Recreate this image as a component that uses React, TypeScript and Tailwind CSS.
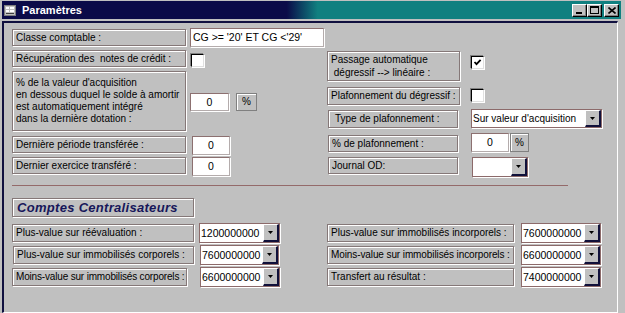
import React from "react";

type P = { className?: string; children?: React.ReactNode };

function Label({ className = "", children }: P) {
  return (
    <div
      className={`shrink-0 border border-[#857878] bg-[#c0c0c0] shadow-[1px_1px_0_#fff,inset_1px_1px_0_#fff] pl-[3px] flex items-center leading-[12px] whitespace-nowrap ${className}`}
    >
      {children}
    </div>
  );
}

function Check({ className = "", checked = false }: { className?: string; checked?: boolean }) {
  return (
    <div
      className={`shrink-0 w-[13px] h-[13px] bg-white border border-black border-b-[#e0e0e0] border-r-[#e0e0e0] shadow-[-1px_-1px_0_#808080,1px_1px_0_#fff] flex items-center justify-center ${className}`}
    >
      {checked && (
        <svg width="9" height="9" viewBox="0 0 9 9">
          <path d="M1.5 4 L3.5 6.2 L7.6 1.8" stroke="black" strokeWidth="1.8" fill="none" />
        </svg>
      )}
    </div>
  );
}

function Field({ className = "", children }: P) {
  return (
    <div
      className={`shrink-0 bg-white border border-[#8c7070] border-b-[#b4acac] border-r-[#b4acac] shadow-[1px_1px_0_#fff] flex items-center justify-center text-[10.5px] leading-none ${className}`}
    >
      {children}
    </div>
  );
}

function PctBtn({ className = "" }: P) {
  return (
    <div
      className={`shrink-0 bg-[#c0c0c0] border border-[#808080] shadow-[inset_1px_1px_0_#fff] flex items-center justify-center text-[10px] leading-none ${className}`}
    >
      %
    </div>
  );
}

function Combo({ className = "", value = "", textClass = "text-[10.5px]" }: { className?: string; value?: string; textClass?: string }) {
  return (
    <div className={`shrink-0 flex bg-white border border-[#8c6a6a] shadow-[1px_1px_0_#fff] ${className}`}>
      <div className={`flex-1 flex items-center pl-[1px] leading-none overflow-hidden whitespace-nowrap ${textClass}`}>
        {value}
      </div>
      <div className="w-[16px] shrink-0 bg-[#c0c0c0] border-t border-l border-t-white border-l-white border-r-2 border-b-2 border-r-[#10103a] border-b-[#10103a] flex items-center justify-center">
        <svg width="5" height="3" viewBox="0 0 5 3">
          <path d="M0 0h5L2.5 3z" fill="black" />
        </svg>
      </div>
    </div>
  );
}

function WinBtn({ children, className = "" }: P) {
  return (
    <div
      className={`w-[15px] h-[13px] bg-[#c0c0c0] border border-white border-b-black border-r-black shadow-[inset_-1px_-1px_0_#808080] flex items-center justify-center ${className}`}
    >
      {children}
    </div>
  );
}

export default function App() {
  return (
    <div className="w-[625px] h-[313px] bg-[#c0c0c0] overflow-hidden font-['Liberation_Sans',Arial,sans-serif] text-[10px] text-black">
      {/* Title bar */}
      <div className="ml-[2px] mt-[1px] w-[619px] h-[18px] flex items-center bg-[linear-gradient(to_right,#0b0b48_0%,#0b0b48_46%,#108080_51%,#108080_100%)]">
        <svg width="12" height="11" viewBox="0 0 12 11" className="ml-[2px]">
          <rect x="0.5" y="0.5" width="11" height="10" fill="#c0c0c0" stroke="#808080" />
          <rect x="2" y="2" width="3" height="2" fill="#fff" />
          <rect x="6" y="2" width="4" height="2" fill="#fff" />
          <rect x="2" y="5" width="3" height="2" fill="#fff" />
          <rect x="6" y="5" width="4" height="2" fill="#fff" />
          <rect x="2" y="8" width="8" height="1" fill="#404040" />
        </svg>
        <span className="ml-[6px] text-white font-bold text-[11px] leading-none">Paramètres</span>
        <div className="ml-auto flex items-center mr-[2px]">
          <WinBtn>
            <svg width="7" height="7" viewBox="0 0 7 7">
              <rect x="0" y="5" width="6" height="2" fill="black" />
            </svg>
          </WinBtn>
          <WinBtn>
            <svg width="9" height="8" viewBox="0 0 9 8">
              <rect x="0.5" y="0.5" width="8" height="7" fill="none" stroke="black" />
              <rect x="0" y="0" width="9" height="2" fill="black" />
            </svg>
          </WinBtn>
          <WinBtn className="ml-[2px]">
            <svg width="8" height="7" viewBox="0 0 8 7">
              <path d="M0.5 0.5 L7.5 6.5 M7.5 0.5 L0.5 6.5" stroke="black" strokeWidth="1.6" />
            </svg>
          </WinBtn>
        </div>
      </div>

      {/* Content pane */}
      <div className="ml-[2px] mt-[2px] w-[616px] h-[292px] border-l-2 border-t-2 border-[#10103f] border-r border-b border-r-white border-b-white pl-[8px] pt-[5px]">
        {/* Top section */}
        <div className="flex items-start">
          {/* Left column */}
          <div className="w-[315px] shrink-0 flex flex-col">
            <div className="flex items-start">
              <Label className="w-[174px] h-[17px] mt-[1px]">Classe comptable :</Label>
              <Field className="ml-[4px] w-[134px] h-[19px] justify-start! pl-[2px]">
                CG &gt;= '20' ET CG &lt;'29'
              </Field>
            </div>
            <div className="flex items-start mt-[3px]">
              <Label className="w-[174px] h-[17px]">Récupération des&nbsp; notes de crédit :</Label>
              <Check className="ml-[5px] mt-[4px]" />
            </div>
            <div className="flex items-start mt-[4px]">
              <Label className="w-[174px] h-[60px] items-start! pt-[5px] pl-[2px]">
                <div className="leading-[12px]">
                  % de la valeur d'acquisition
                  <br />
                  en dessous duquel le solde à amortir
                  <br />
                  est automatiquement intégré
                  <br />
                  dans la dernière dotation :
                </div>
              </Label>
              <Field className="ml-[4px] mt-[22px] w-[39px] h-[18px]">0</Field>
              <PctBtn className="ml-[7px] mt-[22px] w-[21px] h-[18px]" />
            </div>
            <div className="flex items-start mt-[5px]">
              <Label className="w-[174px] h-[17px]">Dernière période transférée :</Label>
              <Field className="ml-[6px] w-[38px] h-[19px]">0</Field>
            </div>
            <div className="flex items-start mt-[2px]">
              <Label className="w-[174px] h-[17px]">Dernier exercice transféré :</Label>
              <Field className="ml-[6px] w-[38px] h-[19px]">0</Field>
            </div>
          </div>

          {/* Right column */}
          <div className="flex flex-col">
            <div className="flex items-start mt-[23px]">
              <Label className="w-[133px] h-[30px] items-start! pt-[1px]">
                <div className="leading-[13px]">
                  Passage automatique
                  <br />
                  &nbsp;dégressif --&gt; linéaire :
                </div>
              </Label>
              <Check className="ml-[11px] mt-[5px]" checked />
            </div>
            <div className="flex items-start mt-[6px]">
              <Label className="w-[133px] h-[18px]">Plafonnement du dégressif :</Label>
              <Check className="ml-[11px] mt-[2px]" />
            </div>
            <div className="flex items-start mt-[4px]">
              <Label className="ml-[1px] w-[130px] h-[18px] mt-[1px] pl-[6px]">Type de plafonnement :</Label>
              <Combo className="ml-[13px] w-[131px] h-[19px]" value="Sur valeur d'acquisition" textClass="text-[10px]" />
            </div>
            <div className="flex items-start mt-[5px]">
              <Label className="ml-[1px] w-[130px] h-[17px] mt-[2px] pl-[2px]">% de plafonnement :</Label>
              <Field className="ml-[13px] w-[38px] h-[19px]">0</Field>
              <PctBtn className="ml-[1px] w-[19px] h-[19px]" />
            </div>
            <div className="flex items-start mt-[5px]">
              <Label className="ml-[1px] w-[130px] h-[17px] pl-[2px]">Journal OD:</Label>
              <Combo className="ml-[14px] w-[56px] h-[20px]" />
            </div>
          </div>
        </div>

        {/* Divider */}
        <div className="mt-[8px] w-[556px] h-[1px] bg-[#946a6a]" />

        {/* Heading */}
        <div className="mt-[12px] w-[182px] h-[19px] border border-[#857878] shadow-[1px_1px_0_#fff,inset_1px_1px_0_#fff] flex items-center pl-[4px]">
          <span className="font-bold italic text-[13px] tracking-[0.3px] text-[#17175a] leading-none">
            Comptes Centralisateurs
          </span>
        </div>

        {/* Bottom grid */}
        <div className="mt-[6px] flex flex-col gap-[2px]">
          <div className="flex items-start h-[20px]">
            <div className="w-[315px] shrink-0 flex items-start">
              <Label className="w-[182px] h-[18px] mt-[1px] border-[#8c6a6a]">Plus-value sur réévaluation :</Label>
              <Combo className="ml-[5px] w-[81px] h-[20px]" value="1200000000" />
            </div>
            <Label className="w-[187px] h-[18px] mt-[1px] border-[#8c6a6a]">Plus-value sur immobilisés incorporels :</Label>
            <Combo className="ml-[7px] w-[80px] h-[20px]" value="7600000000" />
          </div>
          <div className="flex items-start h-[20px]">
            <div className="w-[315px] shrink-0 flex items-start">
              <Label className="ml-[1px] w-[181px] h-[18px] mt-[1px] border-[#8c6a6a]">Plus-value sur immobilisés corporels :</Label>
              <Combo className="ml-[6px] w-[79px] h-[20px]" value="7600000000" />
            </div>
            <Label className="w-[187px] h-[18px] mt-[1px] border-[#8c6a6a] tracking-[-0.1px]">Moins-value sur immobilisés incorporels :</Label>
            <Combo className="ml-[7px] w-[80px] h-[20px]" value="6600000000" />
          </div>
          <div className="flex items-start h-[20px]">
            <div className="w-[315px] shrink-0 flex items-start">
              <Label className="w-[175px] h-[18px] mt-[1px] border-[#8c6a6a] tracking-[-0.17px]">Moins-value sur immobilisés corporels :</Label>
              <Combo className="ml-[13px] w-[80px] h-[20px]" value="6600000000" />
            </div>
            <Label className="w-[187px] h-[18px] mt-[1px] border-[#8c6a6a]">Transfert au résultat :</Label>
            <Combo className="ml-[7px] w-[80px] h-[20px]" value="7400000000" />
          </div>
        </div>
      </div>
    </div>
  );
}
